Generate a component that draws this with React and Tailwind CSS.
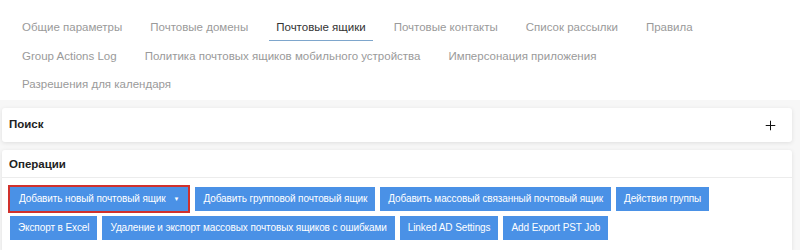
import { Plus } from "lucide-react";

const tabs = [
  ["Общие параметры", "Почтовые домены", "Почтовые ящики", "Почтовые контакты", "Список рассылки", "Правила"],
  ["Group Actions Log", "Политика почтовых ящиков мобильного устройства", "Имперсонация приложения"],
  ["Разрешения для календаря"],
];

const activeTab = "Почтовые ящики";

const buttonRows = [
  [
    "Добавить групповой почтовый ящик",
    "Добавить массовый связанный почтовый ящик",
    "Действия группы",
  ],
  [
    "Экспорт в Excel",
    "Удаление и экспорт массовых почтовых ящиков с ошибками",
    "Linked AD Settings",
    "Add Export PST Job",
  ],
];

const btnClasses =
  "h-[24px] bg-[#4a91e6] px-[8px] text-[10px] leading-none tracking-[-0.1px] text-white whitespace-nowrap";

export default function App() {
  return (
    <div
      className="h-[250px] w-[800px] overflow-hidden bg-[#f7f7f7]"
      style={{ fontFamily: '"Liberation Sans", Arial, sans-serif' }}
    >
      <div className="flex flex-col gap-[6.5px] bg-white px-[15px] pt-[19px] pb-[2px]">
        {tabs.map((row, i) => (
          <div key={i} className="flex h-[22px] items-start gap-[14px]">
            {row.map((tab) => (
              <div
                key={tab}
                className={
                  tab === activeTab
                    ? "border-b border-[#7ea6cc] px-[7px] pb-[5px] text-[11.5px] leading-[16px] text-[#333]"
                    : "px-[7px] pb-[5px] text-[11.5px] leading-[16px] text-[#9a9a9a]"
                }
              >
                {tab}
              </div>
            ))}
          </div>
        ))}
      </div>

      <div className="pl-[2px] pr-[8px] pt-[8px]">
        <div className="flex h-[34px] items-center justify-between rounded-[3px] bg-white px-[7px] shadow-[0_1px_4px_rgba(0,0,0,0.1)]">
          <span className="text-[11.5px] font-bold text-[#222]">Поиск</span>
          <Plus className="mr-[7px] h-[15px] w-[15px] text-[#111]" strokeWidth={1.6} />
        </div>

        <div className="mt-[8px] rounded-[3px] bg-white shadow-[0_1px_4px_rgba(0,0,0,0.1)]">
          <div className="flex h-[28px] items-center border-b border-[#ececec] px-[7px] pt-[3px]">
            <span className="text-[11.5px] font-bold text-[#222]">Операции</span>
          </div>
          <div className="flex flex-col gap-[3px] px-[6px] pt-[7px] pb-[12px]">
            <div className="flex gap-[5px]">
              <div className="border-2 border-[#d0312d]">
                <button className={`${btnClasses} flex items-center gap-[8px] pl-[9px] pr-[9px]`}>
                  Добавить новый почтовый ящик
                  <span className="text-[6px]">▼</span>
                </button>
              </div>
              {buttonRows[0].map((b) => (
                <button key={b} className={`${btnClasses} self-center`}>
                  {b}
                </button>
              ))}
            </div>
            <div className="flex gap-[5px] pl-[2px]">
              {buttonRows[1].map((b) => (
                <button key={b} className={btnClasses}>
                  {b}
                </button>
              ))}
            </div>
          </div>
        </div>
      </div>
    </div>
  );
}
